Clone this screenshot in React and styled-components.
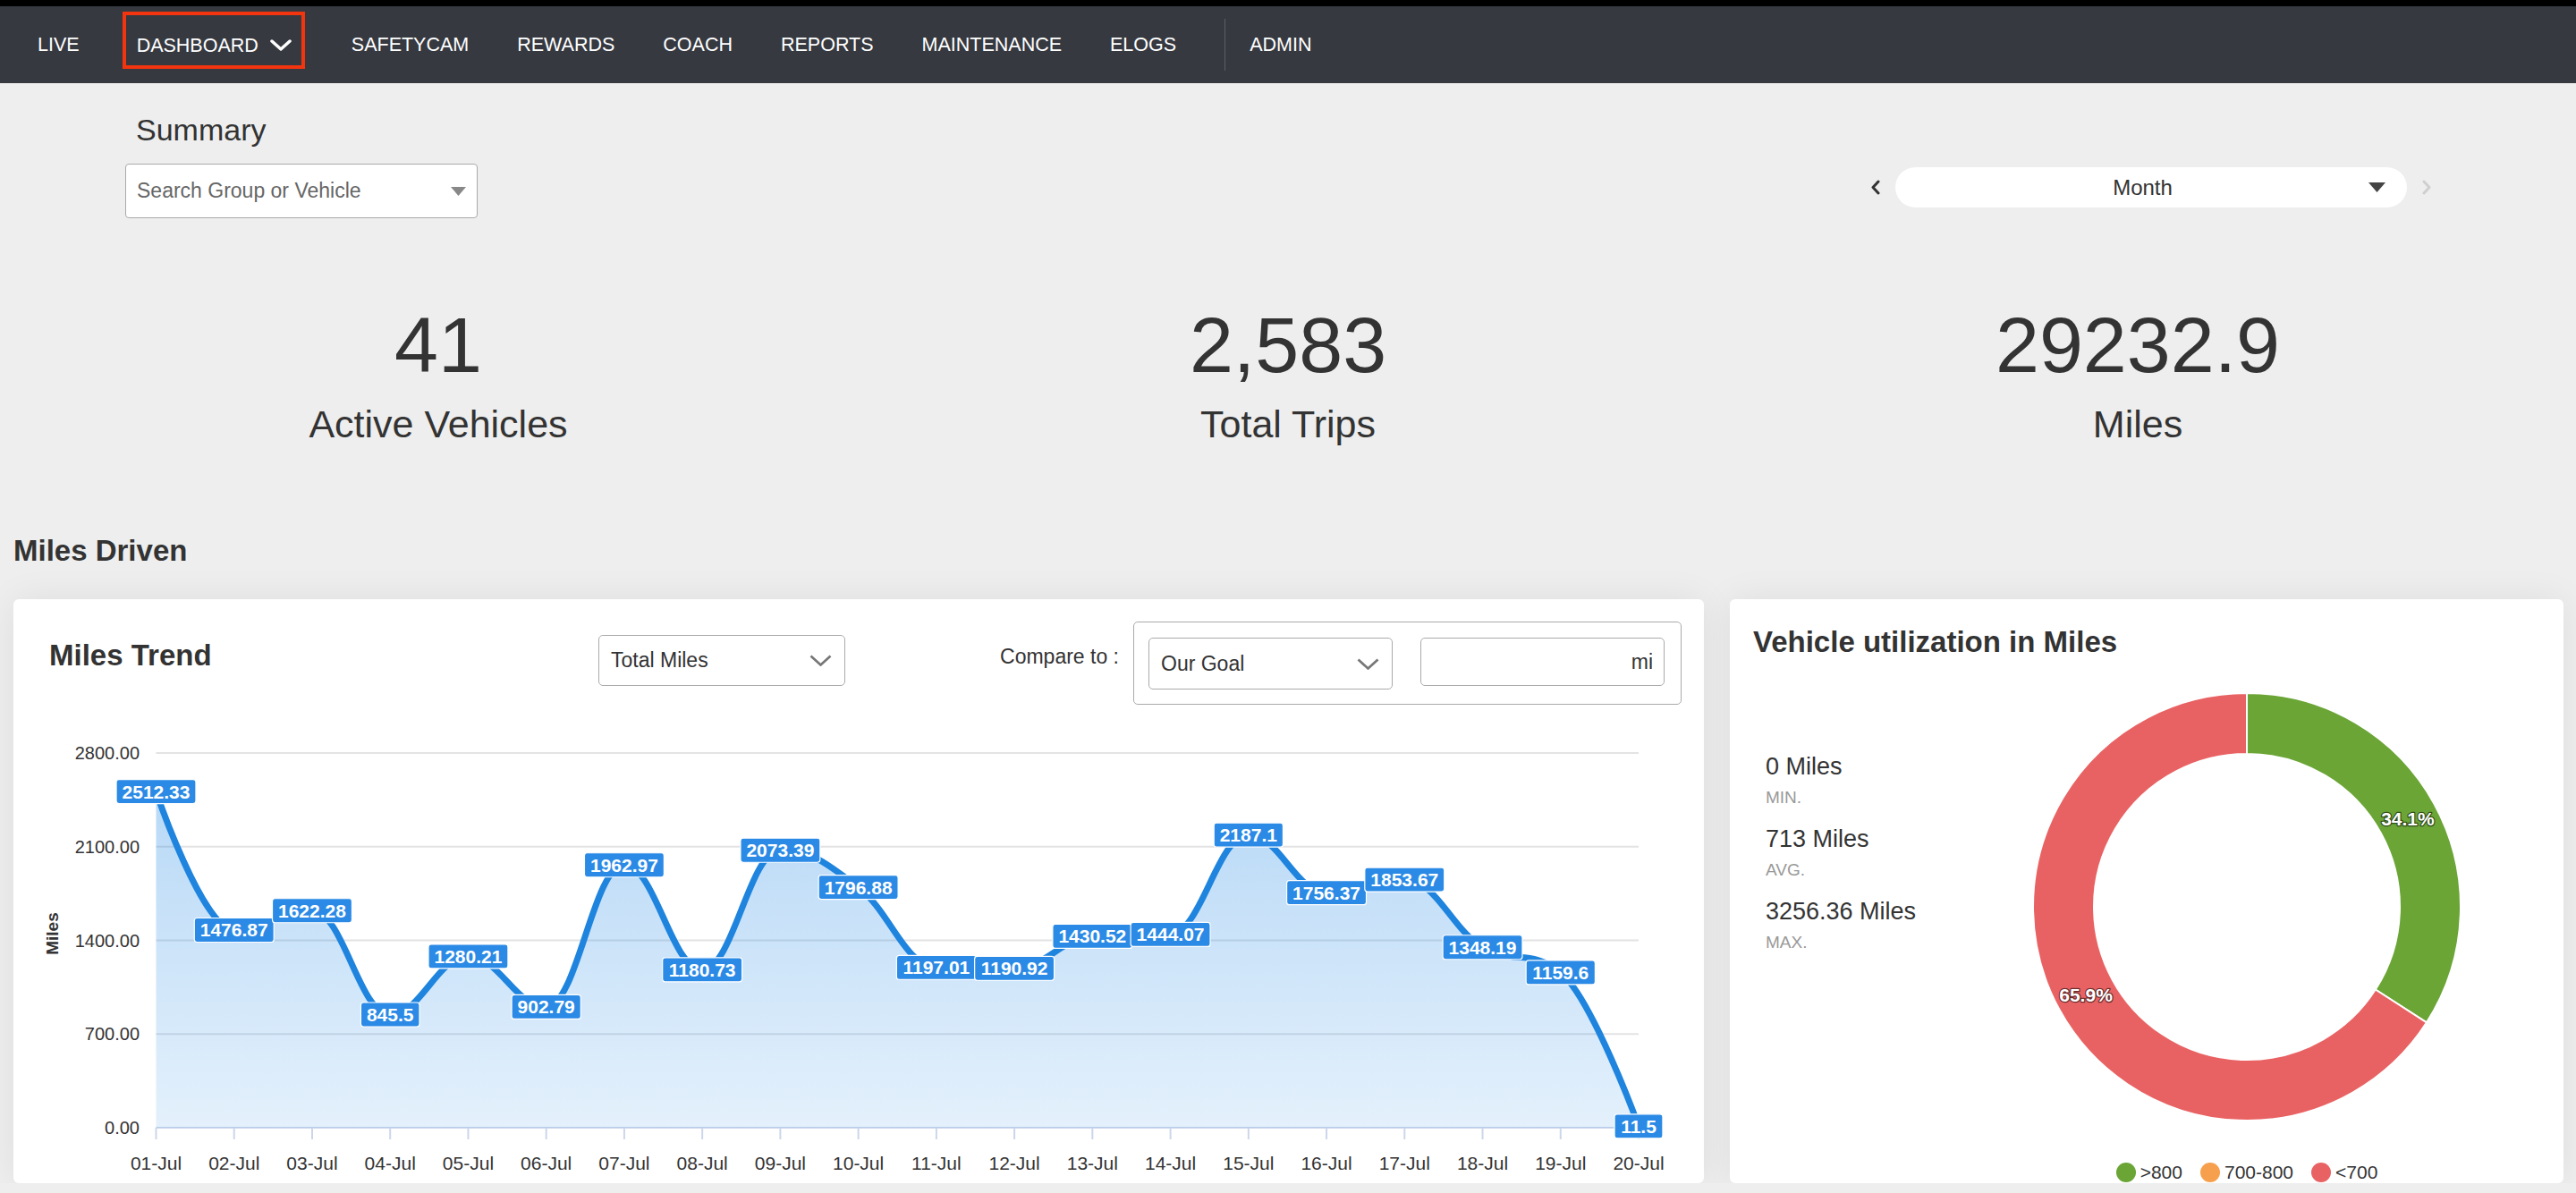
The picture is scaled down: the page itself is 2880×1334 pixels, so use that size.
import React from "react";
import styled, { createGlobalStyle } from "styled-components";

const NAV_ITEMS = ["LIVE", "DASHBOARD", "SAFETYCAM", "REWARDS", "COACH", "REPORTS", "MAINTENANCE", "ELOGS"];

const MILES = [
  2512.33, 1476.87, 1622.28, 845.5, 1280.21, 902.79, 1962.97, 1180.73, 2073.39, 1796.88,
  1197.01, 1190.92, 1430.52, 1444.07, 2187.1, 1756.37, 1853.67, 1348.19, 1159.6, 11.5,
];

// chart geometry (svg units = screen px)
const CHART_W = 1890;
const CHART_H = 535;
const X0 = 159.5;
const XN = 1817;
const Y0 = 473;
const YTOP = 54;
const YMAX = 2800;
const DX = (XN - X0) / (MILES.length - 1);

const points = MILES.map((v, i) => ({ x: X0 + i * DX, y: Y0 - (v / YMAX) * (Y0 - YTOP), v }));

// highcharts-like spline
function splinePath(p) {
  const s = 1.5;
  const d = s + 1;
  const ctrl = p.map((pt, i) => {
    const prev = p[i - 1];
    const next = p[i + 1];
    if (!prev || !next) return null;
    let lx = (s * pt.x + prev.x) / d;
    let ly = (s * pt.y + prev.y) / d;
    const rx = (s * pt.x + next.x) / d;
    let ry = (s * pt.y + next.y) / d;
    const corr = ((ry - ly) * (rx - pt.x)) / (rx - lx) + pt.y - ry;
    ly += corr;
    ry += corr;
    if (ly > prev.y && ly > pt.y) {
      ly = Math.max(prev.y, pt.y);
      ry = 2 * pt.y - ly;
    } else if (ly < prev.y && ly < pt.y) {
      ly = Math.min(prev.y, pt.y);
      ry = 2 * pt.y - ly;
    }
    if (ry > next.y && ry > pt.y) {
      ry = Math.max(next.y, pt.y);
      ly = 2 * pt.y - ry;
    } else if (ry < next.y && ry < pt.y) {
      ry = Math.min(next.y, pt.y);
      ly = 2 * pt.y - ry;
    }
    return { lx, ly, rx, ry };
  });
  let path = `M${p[0].x},${p[0].y}`;
  for (let i = 1; i < p.length; i++) {
    const a = ctrl[i - 1];
    const b = ctrl[i];
    const c1x = a ? a.rx : p[i - 1].x;
    const c1y = a ? a.ry : p[i - 1].y;
    const c2x = b ? b.lx : p[i].x;
    const c2y = b ? b.ly : p[i].y;
    path += ` C${c1x},${c1y} ${c2x},${c2y} ${p[i].x},${p[i].y}`;
  }
  return path;
}

const linePath = splinePath(points);
const areaPath = `${linePath} L${XN},${Y0} L${X0},${Y0} Z`;

const labelWidth = (txt) =>
  txt.split("").reduce((w, c) => w + (c === "." ? 5.84 : 11.68), 0) + 13;

// donut
function arcPath(cx, cy, R, r, a0, a1) {
  const pt = (rad, a) => [
    cx + rad * Math.sin((a * Math.PI) / 180),
    cy - rad * Math.cos((a * Math.PI) / 180),
  ];
  const large = a1 - a0 > 180 ? 1 : 0;
  const [x0, y0] = pt(R, a0);
  const [x1, y1] = pt(R, a1);
  const [x2, y2] = pt(r, a1);
  const [x3, y3] = pt(r, a0);
  return `M${x0},${y0} A${R},${R} 0 ${large} 1 ${x1},${y1} L${x2},${y2} A${r},${r} 0 ${large} 0 ${x3},${y3} Z`;
}

const SLICES = [
  { label: "34.1%", pct: 34.1, color: "#6aa536" },
  { label: "65.9%", pct: 65.9, color: "#e96263" },
];

const LEGEND = [
  { name: ">800", color: "#6aa536" },
  { name: "700-800", color: "#f6a04d" },
  { name: "<700", color: "#e96263" },
];

const App = () => {
  const cx = 280;
  const cy = 276;
  let start = 0;
  const slices = SLICES.map((s) => {
    const end = start + (s.pct / 100) * 360;
    const mid = ((start + end) / 2) * (Math.PI / 180);
    const out = {
      ...s,
      d: arcPath(cx, cy, 239, 171, start, end),
      lx: cx + 205 * Math.sin(mid),
      ly: cy - 205 * Math.cos(mid),
    };
    start = end;
    return out;
  });

  return (
    <>
      <GlobalStyle />
      <Nav>
        {NAV_ITEMS.map((item) =>
          item === "DASHBOARD" ? (
            <ActiveNavItem key={item}>
              {item}
              <svg width="24" height="13" viewBox="0 0 24 13">
                <polyline
                  points="2,2 12,11 22,2"
                  fill="none"
                  stroke="#fff"
                  strokeWidth="3.5"
                  strokeLinecap="round"
                  strokeLinejoin="round"
                />
              </svg>
            </ActiveNavItem>
          ) : (
            <NavItem key={item}>{item}</NavItem>
          )
        )}
        <NavDivider />
        <NavItem>ADMIN</NavItem>
      </Nav>

      <Header>
        <div>
          <PageTitle>Summary</PageTitle>
          <SearchBox>
            Search Group or Vehicle
            <svg width="17" height="10" viewBox="0 0 17 10">
              <polygon points="0,0 17,0 8.5,10" fill="#888" />
            </svg>
          </SearchBox>
        </div>
        <PeriodPicker>
          <ArrowIcon width="12" height="17" viewBox="0 0 12 17" $muted={false}>
            <polyline points="9,2 3,8.5 9,15" />
          </ArrowIcon>
          <PeriodPill>
            <PillLabel>Month</PillLabel>
            <svg width="19" height="11" viewBox="0 0 19 11">
              <polygon points="0,0 19,0 9.5,11" fill="#444" />
            </svg>
          </PeriodPill>
          <ArrowIcon width="12" height="17" viewBox="0 0 12 17" $muted>
            <polyline points="3,2 9,8.5 3,15" />
          </ArrowIcon>
        </PeriodPicker>
      </Header>

      <StatsRow>
        <div>
          <StatValue>41</StatValue>
          <StatLabel>Active Vehicles</StatLabel>
        </div>
        <div>
          <StatValue>2,583</StatValue>
          <StatLabel>Total Trips</StatLabel>
        </div>
        <div>
          <StatValue>29232.9</StatValue>
          <StatLabel>Miles</StatLabel>
        </div>
      </StatsRow>

      <SectionTitle>Miles Driven</SectionTitle>

      <CardsRow>
        <Card>
          <TrendHeader>
            <CardTitle $width="614px" $top="18px">
              Miles Trend
            </CardTitle>
            <DropSelect $width="276px" $height="57px" $top="15px">
              Total Miles
              <SelectChevron />
            </DropSelect>
            <CompareLabel>Compare to :</CompareLabel>
            <CompareBox>
              <DropSelect $width="273px" $height="58px" $top="0">
                Our Goal
                <SelectChevron />
              </DropSelect>
              <GoalInput>mi</GoalInput>
            </CompareBox>
          </TrendHeader>

          <ChartSvg viewBox={`0 0 ${CHART_W} ${CHART_H}`} width={CHART_W} height={CHART_H}>
            <defs>
              <linearGradient id="areaFill" x1="0" y1={YTOP} x2="0" y2={Y0} gradientUnits="userSpaceOnUse">
                <stop offset="0" stopColor="#1e86e4" stopOpacity="0.34" />
                <stop offset="1" stopColor="#1e86e4" stopOpacity="0.12" />
              </linearGradient>
            </defs>

            {[0, 700, 1400, 2100, 2800].map((v) => {
              const y = Y0 - (v / YMAX) * (Y0 - YTOP);
              return (
                <g key={v}>
                  <line x1={X0} x2={XN} y1={y} y2={y} stroke={v === 0 ? "#ccd6eb" : "#e3e3e3"} strokeWidth="2" />
                  <AxisText x="141" y={y + 7} textAnchor="end">
                    {v.toFixed(2)}
                  </AxisText>
                </g>
              );
            })}

            {points.map((p, i) => (
              <g key={i}>
                <line x1={p.x} x2={p.x} y1={Y0} y2={Y0 + 13} stroke="#ccd6eb" strokeWidth="2" />
                <AxisText x={p.x} y="520" textAnchor="middle" $size="21px">
                  {String(i + 1).padStart(2, "0")}-Jul
                </AxisText>
              </g>
            ))}

            <AxisTitle x="43" y="256" transform="rotate(-90 43 256)" textAnchor="middle" dominantBaseline="central">
              Miles
            </AxisTitle>

            <path d={areaPath} fill="url(#areaFill)" />
            <path d={linePath} fill="none" stroke="#1f84de" strokeWidth="7" strokeLinejoin="round" strokeLinecap="round" />

            {points.map((p, i) => {
              const txt = String(p.v);
              const w = labelWidth(txt);
              return (
                <g key={i}>
                  <rect x={p.x - w / 2} y={p.y - 13.5} width={w} height="27" rx="3" fill="#2b8ae5" stroke="#fff" strokeWidth="1.2" />
                  <DataLabel x={p.x} y={p.y + 7.5} textAnchor="middle">
                    {txt}
                  </DataLabel>
                </g>
              );
            })}
          </ChartSvg>
        </Card>

        <UtilCard>
          <CardTitle>Vehicle utilization in Miles</CardTitle>
          <UtilBody>
            <StatsList>
              <StatGroup>
                <SmallValue>0 Miles</SmallValue>
                <SmallCaption>MIN.</SmallCaption>
              </StatGroup>
              <StatGroup>
                <SmallValue>713 Miles</SmallValue>
                <SmallCaption>AVG.</SmallCaption>
              </StatGroup>
              <StatGroup>
                <SmallValue>3256.36 Miles</SmallValue>
                <SmallCaption>MAX.</SmallCaption>
              </StatGroup>
            </StatsList>
            <DonutColumn>
              <svg width="560" height="562" viewBox="0 0 560 562">
                {slices.map((s) => (
                  <path key={s.label} d={s.d} fill={s.color} stroke="#fff" strokeWidth="2" strokeLinejoin="round" />
                ))}
                {slices.map((s) => (
                  <SliceLabel key={s.label} x={s.lx} y={s.ly + 7.5} textAnchor="middle">
                    {s.label}
                  </SliceLabel>
                ))}
              </svg>
              <Legend>
                {LEGEND.map((l) => (
                  <LegendItem key={l.name}>
                    <LegendDot $color={l.color} />
                    {l.name}
                  </LegendItem>
                ))}
              </Legend>
            </DonutColumn>
          </UtilBody>
        </UtilCard>
      </CardsRow>
    </>
  );
};

const SelectChevron = () => (
  <svg width="25" height="13" viewBox="0 0 25 13">
    <polyline points="1.5,1.5 12.5,11.5 23.5,1.5" fill="none" stroke="#777" strokeWidth="2.7" />
  </svg>
);

const GlobalStyle = createGlobalStyle`
  html, body {
    margin: 0;
    padding: 0;
    background: #eeeeee;
  }
  body {
    font-family: "Liberation Sans", Arial, Helvetica, sans-serif;
    color: #333;
  }
  *, *::before, *::after {
    box-sizing: border-box;
  }
`;

const Nav = styled.nav`
  display: flex;
  align-items: center;
  height: 93px;
  padding-left: 15px;
  background: #363940;
  border-top: 7px solid #000;
`;

const NavItem = styled.a`
  padding: 0 27px;
  color: #fff;
  font-size: 21.5px;
  line-height: 26px;
  text-decoration: none;
  cursor: pointer;
`;

const ActiveNavItem = styled(NavItem)`
  display: flex;
  align-items: center;
  gap: 13px;
  height: 64px;
  margin: 0 25px 10px 21px;
  padding: 11px 11px 0 12px;
  border: 4px solid #f2340f;
`;

const NavDivider = styled.span`
  width: 1px;
  height: 58px;
  margin-left: 27px;
  background: #5b5e66;
`;

const Header = styled.header`
  display: flex;
  justify-content: space-between;
  align-items: flex-end;
  padding: 32px 161px 0 140px;
`;

const PageTitle = styled.h1`
  margin: 0;
  padding-left: 12px;
  font-size: 34px;
  line-height: 40px;
  font-weight: 400;
  color: #333;
`;

const SearchBox = styled.div`
  display: flex;
  align-items: center;
  justify-content: space-between;
  width: 394px;
  height: 61px;
  margin-top: 18px;
  padding: 0 12px;
  background: #fff;
  border: 1px solid #aaa;
  border-radius: 4px;
  font-size: 23px;
  color: #666;
`;

const PeriodPicker = styled.div`
  display: flex;
  align-items: center;
  gap: 16px;
  margin-bottom: 12px;
`;

const ArrowIcon = styled.svg`
  fill: none;
  stroke: ${(p) => (p.$muted ? "#cfcfcf" : "#333")};
  stroke-width: 3;
  stroke-linecap: round;
  stroke-linejoin: round;
`;

const PeriodPill = styled.div`
  display: flex;
  align-items: center;
  width: 572px;
  height: 45px;
  padding: 0 24px;
  background: #fff;
  border-radius: 23px;
  font-size: 24px;
  color: #333;
`;

const PillLabel = styled.span`
  flex: 1;
  text-align: center;
`;

const StatsRow = styled.section`
  display: grid;
  grid-template-columns: repeat(3, 1fr);
  margin-top: 98px;
  padding: 0 15px;
  text-align: center;
`;

const StatValue = styled.div`
  font-size: 88px;
  line-height: 88px;
  color: #333;
`;

const StatLabel = styled.div`
  margin-top: 19px;
  font-size: 43px;
  line-height: 50px;
  color: #333;
`;

const SectionTitle = styled.h2`
  margin: 97px 0 0;
  padding-left: 15px;
  font-size: 33px;
  line-height: 40px;
  font-weight: 700;
  color: #333;
`;

const CardsRow = styled.div`
  display: grid;
  grid-template-columns: 1890px 932px;
  gap: 29px;
  margin-top: 34px;
  padding-left: 15px;
`;

const Card = styled.div`
  height: 653px;
  overflow: hidden;
  background: #fff;
  border-radius: 6px;
  box-shadow: 0 0 40px rgba(0, 0, 0, 0.07);
`;

const TrendHeader = styled.div`
  display: flex;
  align-items: flex-start;
  padding: 25px 25px 0 40px;
`;

const CardTitle = styled.h3`
  flex: none;
  width: ${(p) => p.$width || "auto"};
  margin: ${(p) => p.$top || "0"} 0 0;
  font-size: 33px;
  line-height: 40px;
  font-weight: 700;
  color: #333;
`;

const DropSelect = styled.div`
  display: flex;
  align-items: center;
  justify-content: space-between;
  width: ${(p) => p.$width};
  height: ${(p) => p.$height};
  margin-top: ${(p) => p.$top};
  padding: 0 14px 0 13px;
  background: #fff;
  border: 1px solid #aaa;
  border-radius: 5px;
  font-size: 23px;
  color: #333;
`;

const CompareLabel = styled.span`
  margin: 26px 16px 0 auto;
  font-size: 23px;
  line-height: 26px;
  color: #333;
`;

const CompareBox = styled.div`
  display: flex;
  align-items: flex-start;
  gap: 31px;
  padding: 17px 18px 16px 16px;
  border: 1px solid #aaa;
  border-radius: 5px;
`;

const GoalInput = styled.div`
  display: flex;
  align-items: center;
  justify-content: flex-end;
  width: 273px;
  height: 54px;
  padding-right: 12px;
  border: 1px solid #aaa;
  border-radius: 5px;
  font-size: 23px;
  color: #333;
`;

const ChartSvg = styled.svg`
  display: block;
  font-family: "Liberation Sans", Arial, sans-serif;
`;

const AxisText = styled.text`
  font-size: ${(p) => p.$size || "20px"};
  fill: #333;
`;

const AxisTitle = styled.text`
  font-size: 19px;
  font-weight: 700;
  fill: #333;
`;

const DataLabel = styled.text`
  font-size: 21px;
  font-weight: 700;
  fill: #fff;
`;

const UtilCard = styled(Card)`
  padding: 28px 26px 0;
`;

const UtilBody = styled.div`
  display: grid;
  grid-template-columns: 272px 560px;
`;

const StatsList = styled.div`
  display: flex;
  flex-direction: column;
  gap: 20px;
  padding: 104px 0 0 14px;
`;

const StatGroup = styled.div`
  display: flex;
  flex-direction: column;
  gap: 9px;
`;

const SmallValue = styled.div`
  font-size: 27px;
  line-height: 30px;
  color: #333;
`;

const SmallCaption = styled.div`
  font-size: 19px;
  line-height: 22px;
  color: #999;
`;

const DonutColumn = styled.div`
  display: flex;
  flex-direction: column;
  align-items: center;
  font-family: "Liberation Sans", Arial, sans-serif;
`;

const SliceLabel = styled.text`
  font-size: 21px;
  font-weight: 700;
  fill: #fff;
  stroke: rgba(0, 0, 0, 0.55);
  stroke-width: 2.5px;
  paint-order: stroke;
  stroke-linejoin: round;
`;

const Legend = styled.div`
  display: flex;
  align-items: center;
  gap: 20px;
  height: 22px;
  font-size: 21px;
  color: #333;
`;

const LegendItem = styled.span`
  display: flex;
  align-items: center;
  gap: 5px;
`;

const LegendDot = styled.span`
  width: 22px;
  height: 22px;
  border-radius: 50%;
  background: ${(p) => p.$color};
`;

export default App;
